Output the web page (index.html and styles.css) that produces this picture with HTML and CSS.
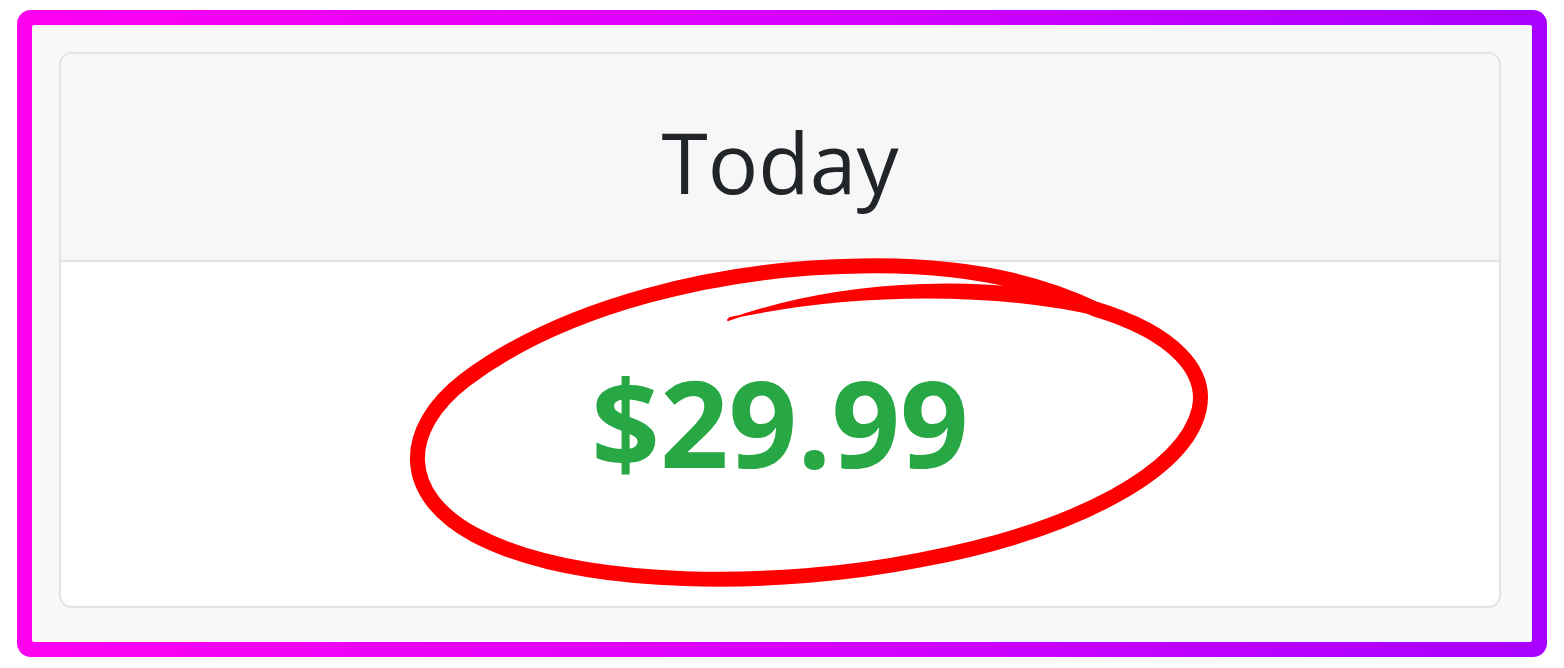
FILE: index.html
```html
<!DOCTYPE html>
<html>
<head>
<meta charset="utf-8">
<link rel="stylesheet" href="styles.css">
</head>
<body>
<div class="frame">
  <div class="inner">
    <div class="card">
      <div class="card-header">Today</div>
      <div class="card-body"><span class="price">$29.99</span></div>
    </div>
  </div>
</div>
<svg class="annotation" width="1564" height="668" viewBox="0 0 1564 668">
  <path class="ring" d="M 1095 309 C 1175 333, 1208 372, 1199 410 C 1185 470, 1080 530, 920 560 C 780 588, 580 590, 475 535 C 400 495, 400 430, 465 380 C 565 305, 720 268, 860 266 C 960 264, 1035 280, 1095 309"/>
  <path class="tail" d="M 728 320 C 850 277, 1000 275, 1100 304 L 1102 316 C 1000 292, 860 290, 730 318 Z"/>
</svg>
</body>
</html>
```

FILE: styles.css
```css
html, body {
  margin: 0;
  padding: 0;
  background: #ffffff;
  width: 1564px;
  height: 668px;
  overflow: hidden;
}
body {
  position: relative;
  font-family: "Open Sans", "Noto Sans", sans-serif;
}
.frame {
  margin: 10px 0 0 17px;
  width: 1530px;
  height: 647px;
  box-sizing: border-box;
  padding: 15px;
  border-radius: 14px;
  background: linear-gradient(90deg, #ff00f0 0%, #d800ff 50%, #a800ff 100%);
}
.inner {
  width: 100%;
  height: 100%;
  box-sizing: border-box;
  background: #f9f9f9;
  border-radius: 2px;
  padding: 27px 31px 34px 27px;
}
.card {
  height: 100%;
  box-sizing: border-box;
  border: 2px solid #e4e4e4;
  border-radius: 13px;
  box-shadow: 0 0 2px rgba(0,0,0,0.06);
  background: #ffffff;
  overflow: hidden;
  display: flex;
  flex-direction: column;
}
.card-header {
  height: 208px;
  flex: none;
  background: #f7f7f7;
  border-bottom: 2px solid #e2e2e2;
  display: flex;
  align-items: center;
  justify-content: center;
  font-size: 84px;
  color: #212529;
  padding-top: 8px;
  box-sizing: border-box;
}
.card-body {
  flex: 1;
  display: flex;
  align-items: center;
  justify-content: center;
}
.price {
  font-size: 120px;
  font-weight: 700;
  color: #28a745;
  margin-top: -26px;
}
.annotation {
  position: absolute;
  left: 0;
  top: 0;
}
.ring {
  fill: none;
  stroke: #ff0000;
  stroke-width: 15px;
  stroke-linecap: round;
  stroke-linejoin: round;
}
.tail {
  fill: #ff0000;
  stroke: #ff0000;
  stroke-width: 2px;
  stroke-linejoin: round;
}
```
